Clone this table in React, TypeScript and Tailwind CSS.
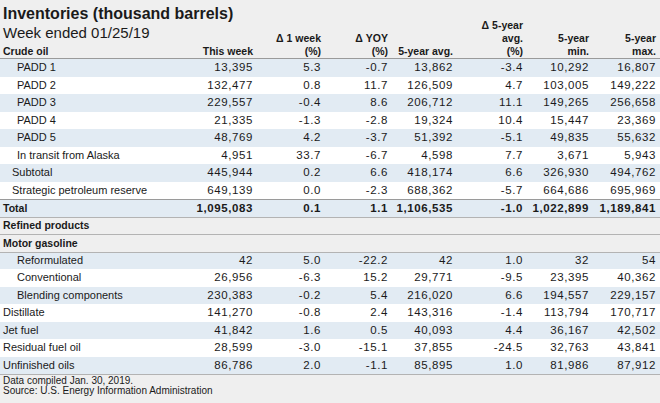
import React from "react";

type Row = {
  label: string;
  vals?: string[];
  bg: "blue" | "white" | "gray";
  indent: 0 | 1 | 2;
  bold?: boolean;
  borderTop?: "dark" | "light";
};

const rows: Row[] = [
  { label: "PADD 1", vals: ["13,395", "5.3", "-0.7", "13,862", "-3.4", "10,292", "16,807"], bg: "blue", indent: 2 },
  { label: "PADD 2", vals: ["132,477", "0.8", "11.7", "126,509", "4.7", "103,005", "149,222"], bg: "white", indent: 2 },
  { label: "PADD 3", vals: ["229,557", "-0.4", "8.6", "206,712", "11.1", "149,265", "256,658"], bg: "blue", indent: 2 },
  { label: "PADD 4", vals: ["21,335", "-1.3", "-2.8", "19,324", "10.4", "15,447", "23,369"], bg: "white", indent: 2 },
  { label: "PADD 5", vals: ["48,769", "4.2", "-3.7", "51,392", "-5.1", "49,835", "55,632"], bg: "blue", indent: 2 },
  { label: "In transit from Alaska", vals: ["4,951", "33.7", "-6.7", "4,598", "7.7", "3,671", "5,943"], bg: "white", indent: 2 },
  { label: "Subtotal", vals: ["445,944", "0.2", "6.6", "418,174", "6.6", "326,930", "494,762"], bg: "blue", indent: 1 },
  { label: "Strategic petroleum reserve", vals: ["649,139", "0.0", "-2.3", "688,362", "-5.7", "664,686", "695,969"], bg: "white", indent: 1 },
  { label: "Total", vals: ["1,095,083", "0.1", "1.1", "1,106,535", "-1.0", "1,022,899", "1,189,841"], bg: "blue", indent: 0, bold: true, borderTop: "dark" },
  { label: "Refined products", bg: "gray", indent: 0, bold: true, borderTop: "light" },
  { label: "Motor gasoline", bg: "gray", indent: 0, bold: true, borderTop: "light" },
  { label: "Reformulated", vals: ["42", "5.0", "-22.2", "42", "1.0", "32", "54"], bg: "blue", indent: 2, borderTop: "light" },
  { label: "Conventional", vals: ["26,956", "-6.3", "15.2", "29,771", "-9.5", "23,395", "40,362"], bg: "white", indent: 2 },
  { label: "Blending components", vals: ["230,383", "-0.2", "5.4", "216,020", "6.6", "194,557", "229,157"], bg: "blue", indent: 2 },
  { label: "Distillate", vals: ["141,270", "-0.8", "2.4", "143,316", "-1.4", "113,794", "170,717"], bg: "white", indent: 0 },
  { label: "Jet fuel", vals: ["41,842", "1.6", "0.5", "40,093", "4.4", "36,167", "42,502"], bg: "blue", indent: 0 },
  { label: "Residual fuel oil", vals: ["28,599", "-3.0", "-15.1", "37,855", "-24.5", "32,763", "43,841"], bg: "white", indent: 0 },
  { label: "Unfinished oils", vals: ["86,786", "2.0", "-1.1", "85,895", "1.0", "81,986", "87,912"], bg: "blue", indent: 0 },
];

const grid = "grid grid-cols-[minmax(0,1fr)_68px_68px_67px_65px_70px_66px_67px] pr-[4px]";
const head = "text-right text-[10.5px] leading-[13px] font-bold whitespace-nowrap";

function DataRow({ r }: { r: Row }) {
  const bg = r.bg === "blue" ? "bg-[#e2ebf3]" : r.bg === "white" ? "bg-white" : "bg-[#efefef]";
  const border = r.borderTop === "dark" ? "border-t border-[#9a9a9a]" : r.borderTop === "light" ? "border-t border-[#b3b3b3]" : "";
  const pad = r.indent === 2 ? "pl-[17px]" : r.indent === 1 ? "pl-[12px]" : "pl-[3px]";
  return (
    <div className={`${grid} ${bg} ${border} h-[17.5px] items-center`}>
      <div className={`${pad} leading-[13px] whitespace-nowrap ${r.bold ? "font-bold text-[10.5px]" : "text-[11px]"}`}>{r.label}</div>
      {(r.vals ?? ["", "", "", "", "", "", ""]).map((v, i) => (
        <div key={i} className={`text-right text-[11.5px] leading-[13px] tracking-[0.6px] tabular-nums whitespace-nowrap ${r.bold ? "font-bold" : ""}`}>
          {v}
        </div>
      ))}
    </div>
  );
}

export default function App() {
  return (
    <div className="w-[660px] h-[403px] bg-[#efefef] text-[#1a1a1a] overflow-hidden" style={{ fontFamily: '"Liberation Sans", Arial, sans-serif' }}>
      <div className={`${grid} items-end border-b border-[#9a9a9a]`}>
        <div className="pl-[3px] pt-[4px]">
          <div className="text-[16px] leading-[20px] font-bold whitespace-nowrap">Inventories (thousand barrels)</div>
          <div className="text-[15px] leading-[18px] whitespace-nowrap">Week ended 01/25/19</div>
          <div className="mt-[3px] text-[10.5px] leading-[13px] font-bold">Crude oil</div>
        </div>
        <div className={head}>This week</div>
        <div className={head}>
          <div>Δ 1 week</div>
          <div>(%)</div>
        </div>
        <div className={head}>
          <div>Δ YOY</div>
          <div>(%)</div>
        </div>
        <div className={head}>5-year avg.</div>
        <div className={head}>
          <div>Δ 5-year</div>
          <div>avg.</div>
          <div>(%)</div>
        </div>
        <div className={head}>
          <div>5-year</div>
          <div>min.</div>
        </div>
        <div className={head}>
          <div>5-year</div>
          <div>max.</div>
        </div>
      </div>
      {rows.map((r, i) => (
        <DataRow key={i} r={r} />
      ))}
      <div className="border-t border-[#b3b3b3] pl-[3px] pt-[1px] text-[10px] leading-[10px]">
        <div>Data compiled Jan. 30, 2019.</div>
        <div>Source: U.S. Energy Information Administration</div>
      </div>
    </div>
  );
}
